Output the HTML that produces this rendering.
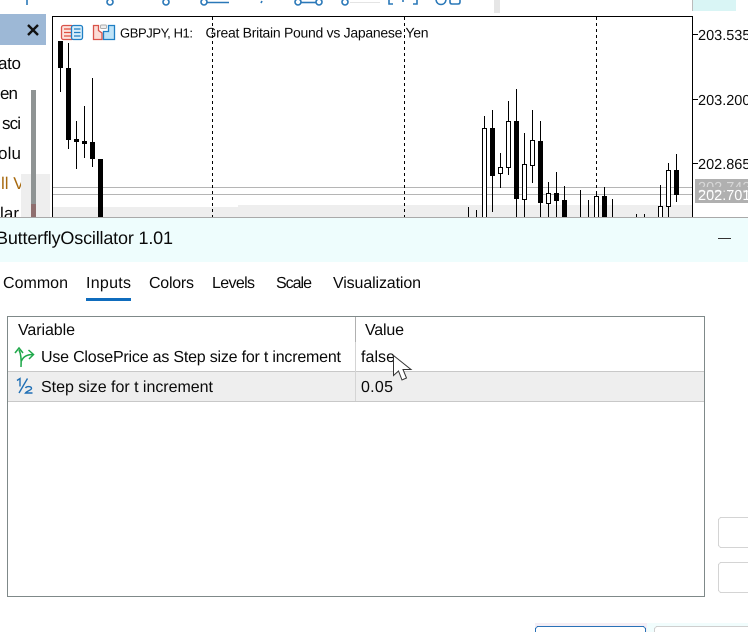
<!DOCTYPE html>
<html>
<head>
<meta charset="utf-8">
<style>
html,body{margin:0;padding:0;background:#fff;width:748px;height:632px;overflow:hidden}
svg{display:block;font-family:"Liberation Sans",sans-serif;shape-rendering:crispEdges}
.s{shape-rendering:auto}
text{fill:#0a0a0a;text-rendering:geometricPrecision;shape-rendering:auto}
</style>
</head>
<body>
<svg width="748" height="632" viewBox="0 0 748 632" xmlns="http://www.w3.org/2000/svg">
<rect width="748" height="632" fill="#fff"/>

<!-- top toolbar fragments -->
<g class="s" fill="#fff" stroke="#2a78b8" stroke-width="1.6">
<path d="M27 0V5" fill="none"/>
<circle cx="110" cy="2" r="3"/>
<circle cx="166" cy="2" r="3"/>
<circle cx="204" cy="2" r="3"/>
<path d="M207 2.5H229" fill="none"/>
<circle cx="298" cy="2" r="3"/>
<circle cx="319" cy="2" r="3"/>
<path d="M301 2.5H316" fill="none"/>
<circle cx="345" cy="2" r="3"/>
<path d="M262 1l-1 2" fill="none"/>
<path d="M389 0V4H393M417 0V4H413" fill="none"/>
<path d="M403 0V2" fill="none"/>
<path d="M436 0C437 6 445 6 446 0M450 0V2Q450 4 452 4H458Q460 4 460 2V0" fill="none"/>
</g>
<rect x="350" y="2" width="30" height="1" fill="#e4e4e4"/>
<rect x="494" y="0" width="6" height="13" fill="#e6e6e6"/>
<rect x="692" y="0" width="44" height="11" fill="#d9f5f5"/>
<rect x="692" y="0" width="1" height="11" fill="#bbb"/>

<!-- left navigator -->
<rect x="0" y="14" width="46" height="31" fill="#9db8d6"/>
<path class="s" d="M28 25L38 35M38 25L28 35" stroke="#111" stroke-width="2.4" fill="none"/>
<text x="-2" y="69" font-size="17" textLength="23">ato</text>
<text x="0" y="99" font-size="17" textLength="18">en</text>
<text x="2" y="129" font-size="17" textLength="19">sci</text>
<text x="-2" y="159" font-size="17" textLength="23">olu</text>
<text x="1" y="189" font-size="17" style="fill:#a86a10">ll V</text>
<text x="0" y="219" font-size="17" textLength="19">lar</text>
<rect x="21" y="174" width="29" height="44" fill="#eeeeee"/>
<rect x="31" y="90" width="5" height="114" fill="#8f9494"/>
<rect x="31" y="204" width="5" height="14" fill="#8f6f6f"/>

<!-- chart -->
<rect x="53" y="205" width="639" height="13" fill="#eeeeee"/>
<rect x="53" y="205" width="185" height="2" fill="#fff"/>
<rect x="52" y="16" width="641" height="1" fill="#000"/>
<rect x="52" y="16" width="1" height="202" fill="#000"/>
<rect x="692" y="16" width="1" height="202" fill="#000"/>
<rect x="53" y="187" width="639" height="1" fill="#b5b5b5"/>
<rect x="53" y="194" width="639" height="1" fill="#b5b5b5"/>

<path d="M212.5 17V218M404.5 17V218M596.5 17V196" stroke="#000" stroke-width="1" stroke-dasharray="3 3" fill="none"/>

<!-- wicks -->
<path stroke="#000" stroke-width="1" fill="none" d="
M60.5 41V92 M68.5 43V149 M76.5 121V169 M84.5 106V158 M92.5 78V167
M468.5 207V218 M476.5 210V218 M484.5 116V128 M492.5 110V212 M500.5 153V188 M508.5 101V175
M516.5 89V218 M524.5 133V218 M532.5 110V183 M540.5 121V218 M548.5 182V218 M556.5 172V218 M564.5 186V218
M580.5 190V218 M588.5 200V218 M596.5 191V196 M604.5 187V196 M612.5 199V218 M636.5 214V218 M644.5 214V218
M660.5 185V206 M668.5 163V218 M676.5 154V202"/>

<!-- black bodies -->
<g fill="#000">
<rect x="58" y="41" width="5" height="27"/>
<rect x="66" y="68" width="5" height="72"/>
<rect x="74" y="139" width="5" height="3"/>
<rect x="82" y="141" width="5" height="3"/>
<rect x="90" y="142" width="5" height="17"/>
<rect x="98" y="159" width="5" height="59"/>
<rect x="490" y="128" width="5" height="48"/>
<rect x="514" y="121" width="5" height="78"/>
<rect x="538" y="141" width="5" height="62"/>
<rect x="554" y="193" width="5" height="8"/>
<rect x="562" y="200" width="5" height="18"/>
<rect x="602" y="196" width="5" height="22"/>
<rect x="674" y="170" width="5" height="25"/>
</g>
<!-- white bodies -->
<g fill="#fff" stroke="#000" stroke-width="1">
<rect x="53.5" y="40.5" width="0" height="5"/>
<rect x="482.5" y="128.5" width="4" height="92"/>
<rect x="498.5" y="167.5" width="4" height="6"/>
<rect x="506.5" y="121.5" width="4" height="46"/>
<rect x="522.5" y="164.5" width="4" height="35"/>
<rect x="530.5" y="140.5" width="4" height="25"/>
<rect x="546.5" y="193.5" width="4" height="10"/>
<rect x="594.5" y="196.5" width="4" height="24"/>
<rect x="658.5" y="206.5" width="4" height="14"/>
<rect x="666.5" y="170.5" width="4" height="36"/>
</g>

<!-- chart header icons -->
<g class="s">
<rect x="61.5" y="25.5" width="12" height="14" rx="2" fill="#fbe3de" stroke="#d9534a" stroke-width="1.3"/>
<rect x="71.5" y="25.5" width="11" height="14" rx="2" fill="#d9eefa" stroke="#1f7fc4" stroke-width="1.3"/>
<path d="M64 29H71M64 32.5H71M64 36H71" stroke="#e2503f" stroke-width="1.3"/>
<path d="M74 29H80.5M74 32.5H80.5M74 36H80.5" stroke="#1f7fc4" stroke-width="1.3"/>
<path d="M93.500 25.500H98.500V30.500L102 33V39.500H93.500Z" fill="#fbdcd6" stroke="#d9534a" stroke-width="1.300"/>
<rect x="100.500" y="25" width="6" height="3.500" rx="1" fill="#eee" stroke="#aaa" stroke-width="0.900"/>
<path d="M103.500 39.500V31.500H108.500V25.500H114.500V39.500Z" fill="#bfe3f7" stroke="#1f7fc4" stroke-width="1.300"/>
</g>
<text x="120" y="37.500" font-size="13" textLength="73">GBPJPY, H1:</text>
<text x="205.500" y="37.500" font-size="14" textLength="223">Great Britain Pound vs Japanese Yen</text>

<!-- price axis -->
<path d="M693 34.500H698M693 99.500H698M693 163.500H698" stroke="#000" stroke-width="1"/>
<text x="698" y="40" font-size="14.500">203.535</text>
<text x="698" y="105" font-size="14.500">203.200</text>
<text x="698" y="169" font-size="14.500">202.865</text>
<rect x="695" y="179" width="53" height="24" fill="#b0b0b0"/>
<text x="698" y="192" font-size="14.500" style="fill:#d8d8d8">202.742</text>
<rect x="695" y="187" width="53" height="3" fill="#b0b0b0"/>
<text x="698" y="200" font-size="14.500" style="fill:#fff">202.701</text>

<!-- dialog title -->
<rect x="0" y="217" width="748" height="1" fill="#a9a9a9"/>
<rect x="0" y="218" width="748" height="44" fill="#eefdfd"/>
<text x="-4" y="244" font-size="18" textLength="177">ButterflyOscillator 1.01</text>
<rect x="718" y="238" width="13" height="1" fill="#333"/>

<!-- tabs -->
<text x="3" y="288" font-size="16" textLength="65">Common</text>
<text x="86" y="288" font-size="16" textLength="45">Inputs</text>
<text x="149" y="288" font-size="16" textLength="45">Colors</text>
<text x="212" y="288" font-size="16" textLength="43">Levels</text>
<text x="276" y="288" font-size="16" textLength="36">Scale</text>
<text x="333" y="288" font-size="16" textLength="88">Visualization</text>
<rect x="86" y="298" width="45" height="3" fill="#0f6cbd"/>

<!-- table -->
<rect x="7.500" y="316.500" width="697" height="280" fill="#fff" stroke="#7f8989" stroke-width="1"/>
<rect x="8" y="372" width="696" height="29" fill="#eeeeee"/>
<rect x="8" y="371" width="696" height="1" fill="#c8c8c8"/>
<rect x="8" y="401" width="696" height="1" fill="#c8c8c8"/>
<rect x="355" y="317" width="1" height="25" fill="#b0b0b0"/>
<rect x="355" y="342" width="1" height="59" fill="#d4d4d4"/>
<text x="18" y="335" font-size="16" textLength="57">Variable</text>
<text x="365" y="335" font-size="16" textLength="39">Value</text>
<text x="41" y="362" font-size="16" textLength="300">Use ClosePrice as Step size for t increment</text>
<text x="361" y="362" font-size="16" textLength="34">false</text>
<text x="41" y="392" font-size="16" textLength="172">Step size for t increment</text>
<text x="361" y="392" font-size="16" textLength="32">0.05</text>

<!-- row icons -->
<g class="s" fill="none">
<path d="M21 367C21.500 359 21 354 19 350M21.500 361C23 357 27 354.500 33 354.500" stroke="#1fa84a" stroke-width="1.500"/>
<path d="M15 353L19 348L23 353M28.500 350L33.500 354.500L29 359" stroke="#1fa84a" stroke-width="1.500"/>
<path d="M17 380.500L20 378.500V386.500M19 393L27.500 378.500M25.500 388C26.500 386 31.500 386 31.500 388.500C31.500 390 27 391 25.500 393H32.500" stroke="#1f6fb5" stroke-width="1.400"/>
</g>

<!-- cursor -->
<path class="s" d="M393.500 355.500V375.500L398.500 371L402 380L406.500 378L403 369.500L411 369.500Z" fill="#fff" stroke="#333" stroke-width="1"/>

<!-- right buttons -->
<rect x="718.500" y="517.500" width="40" height="30" rx="3" fill="#fff" stroke="#d4d4d4"/>
<rect x="718.500" y="562.500" width="40" height="30" rx="3" fill="#fff" stroke="#d4d4d4"/>

<!-- bottom buttons -->
<rect x="535" y="623" width="112" height="9" fill="#f5eef5"/>
<rect x="647" y="623" width="101" height="9" fill="#f1fdfd"/>
<rect x="535.500" y="626.500" width="110" height="14" rx="3" fill="#fff" stroke="#2a72b8"/>
<rect x="654.500" y="626.500" width="110" height="14" rx="3" fill="#fff" stroke="#cfcfcf"/>
</svg>
</body>
</html>
